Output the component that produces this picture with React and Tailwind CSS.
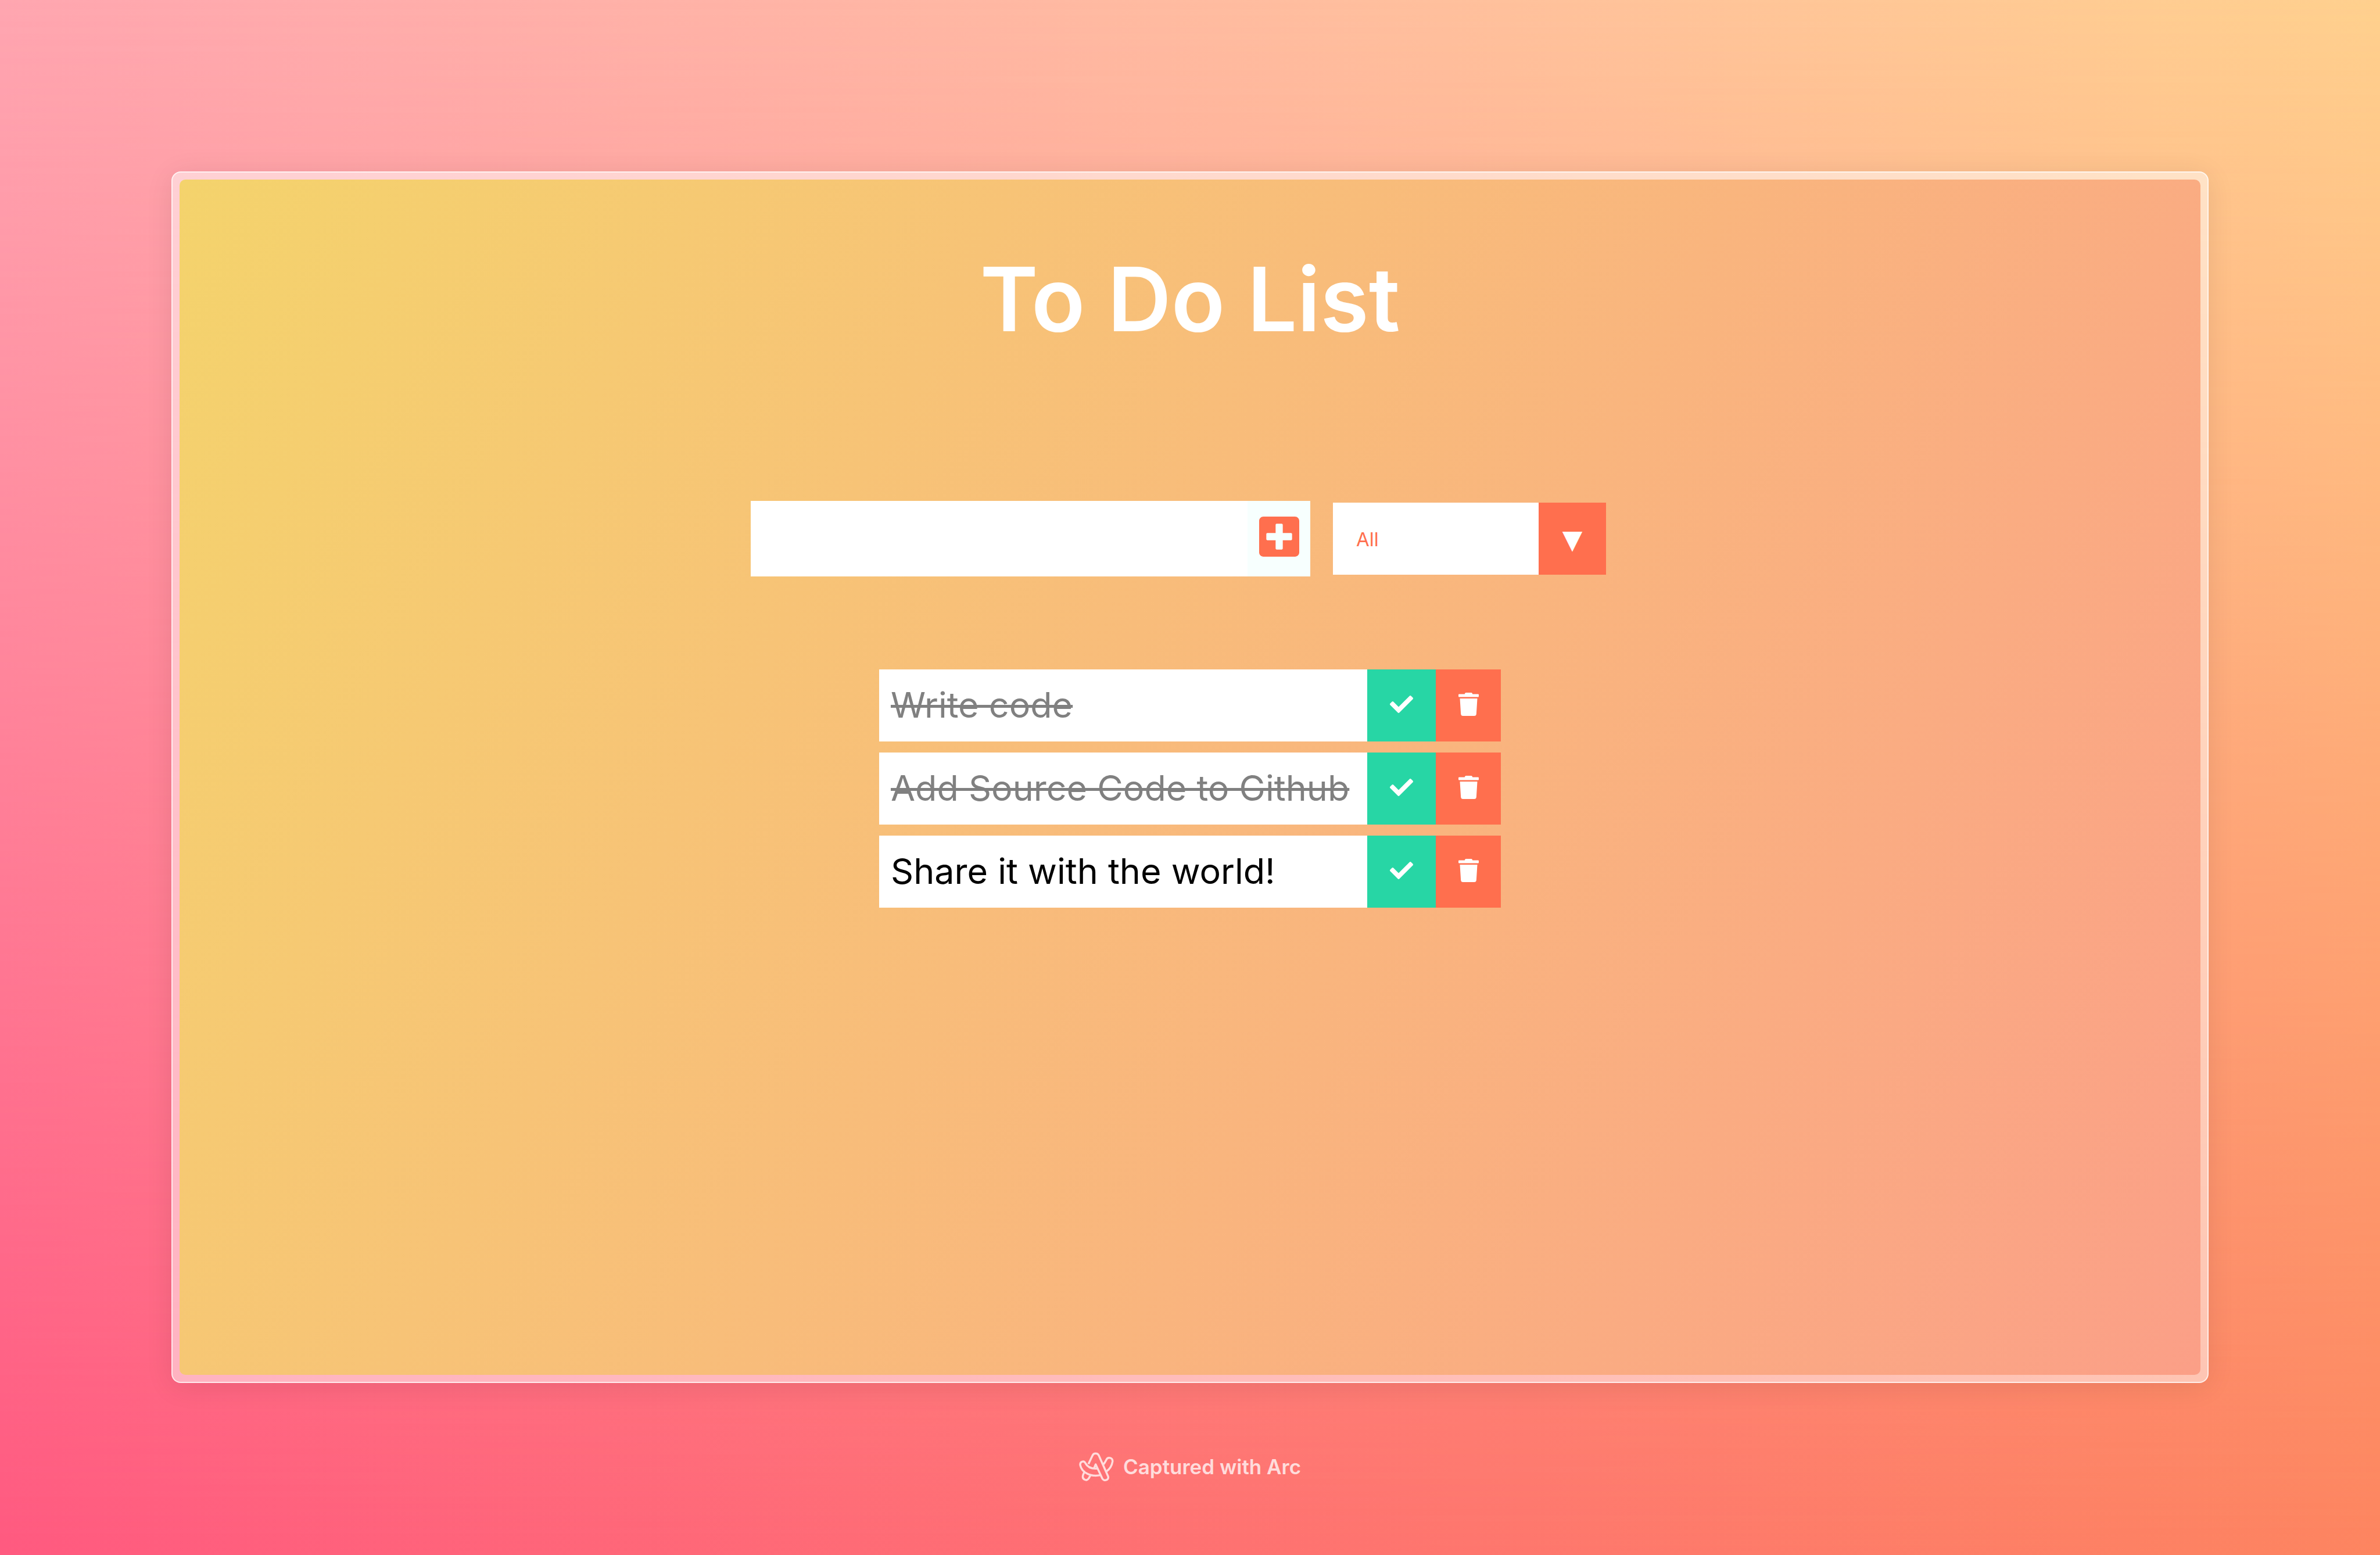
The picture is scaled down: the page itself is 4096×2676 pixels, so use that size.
import { FaCheck, FaPlusSquare, FaTrash } from "react-icons/fa";

const tasks = [
  { text: "Write code", done: true },
  { text: "Add Source Code to Github", done: true },
  { text: "Share it with the world!", done: false },
];

function ArcLogo() {
  return (
    <svg viewBox="26 31 224 188" className="h-[50px] w-[60px]" fill="none" stroke="currentColor" strokeWidth="13" strokeLinejoin="round" aria-hidden="true">
      <path d="M86 108 L113 52 C120 35 145 35 153 52 L213 187 C222 212 186 222 176 202 L133 110 L123 134 M66 102 C58 84 30 90 33 115 C42 158 95 195 166 179 M66 102 C80 127 105 141 145 137 M62 152 L51 180 C43 208 75 222 88 201 L99 182 M184 109 C194 98 198 88 202 80 C211 60 244 64 242 92 C238 117 228 137 204 155" />
    </svg>
  );
}

function AddForm() {
  return (
    <form className="flex items-center justify-center gap-[39px] pr-10" onSubmit={(e) => e.preventDefault()}>
      <div className="flex h-[130px] w-[963px] bg-white">
        <input type="text" aria-label="New task" className="min-w-0 flex-1 bg-white px-5 text-[61px] outline-none" />
        <button type="submit" aria-label="Add task" className="flex w-[108px] items-center justify-center bg-[#f7fffe] pb-2 text-[#ff6f4e]">
          <FaPlusSquare className="h-[79px] w-[69px]" />
        </button>
      </div>
      <div className="relative h-[124px] w-[470px]">
        <select aria-label="Filter tasks" className="size-full appearance-none bg-white px-10 pt-1 text-[33px] text-[#ff6f4e] outline-none">
          <option>All</option>
          <option>Completed</option>
          <option>Uncompleted</option>
        </select>
        <span className="pointer-events-none absolute inset-y-0 right-0 flex w-[116px] items-center justify-center bg-[#ff6f4e] pt-1 font-['DejaVu_Sans'] text-[45px] text-white">▼</span>
      </div>
    </form>
  );
}

function Task({ text, done }) {
  return (
    <li className="flex h-[124px] bg-white">
      <span className={done ? "flex-1 px-5 leading-[122px] text-[#808080] line-through decoration-[5px]" : "flex-1 px-5 leading-[122px] text-black"}>{text}</span>
      <button type="button" aria-label="Complete" className="flex w-[118px] items-center justify-center bg-[#27d6a5] pb-1 text-white">
        <FaCheck className="size-10" />
      </button>
      <button type="button" aria-label="Delete" className="flex w-[112px] items-center justify-center bg-[#ff6f4e] pb-1 text-white">
        <FaTrash className="h-10 w-[35px]" />
      </button>
    </li>
  );
}

export default function App() {
  return (
    <div className="relative isolate flex min-h-screen flex-col bg-linear-to-r from-[#ff5a80] to-[#fd8560] px-[295px] pt-[295px] font-['Inter',sans-serif]">
      <div className="absolute inset-0 -z-10 bg-linear-to-r from-[#ffa6b0] to-[#ffd08e] mask-b-from-0% mask-b-to-100%" />
      <main className="flex flex-1 flex-col rounded-[16px] border-2 border-white/70 bg-white/50 p-3 shadow-[0_6px_48px_rgba(0,0,0,0.09)]">
        <div className="flex flex-1 flex-col items-center rounded-[10px] bg-linear-118 from-[#f4d36c] to-[#fb9f87] pt-[106px]">
          <h1 className="text-[152px] leading-[200px] font-semibold text-white">To Do List</h1>
          <div className="mt-[247px]">
            <AddForm />
          </div>
          <ul className="mt-[160px] flex w-[1070px] flex-col gap-[19px] text-[61px]">
            {tasks.map((t) => (
              <Task key={t.text} text={t.text} done={t.done} />
            ))}
          </ul>
        </div>
      </main>
      <footer className="flex h-[296px] items-center justify-center gap-4 pb-2 text-[35px] font-semibold text-white/75">
        <ArcLogo />
        <span>Captured with Arc</span>
      </footer>
    </div>
  );
}
